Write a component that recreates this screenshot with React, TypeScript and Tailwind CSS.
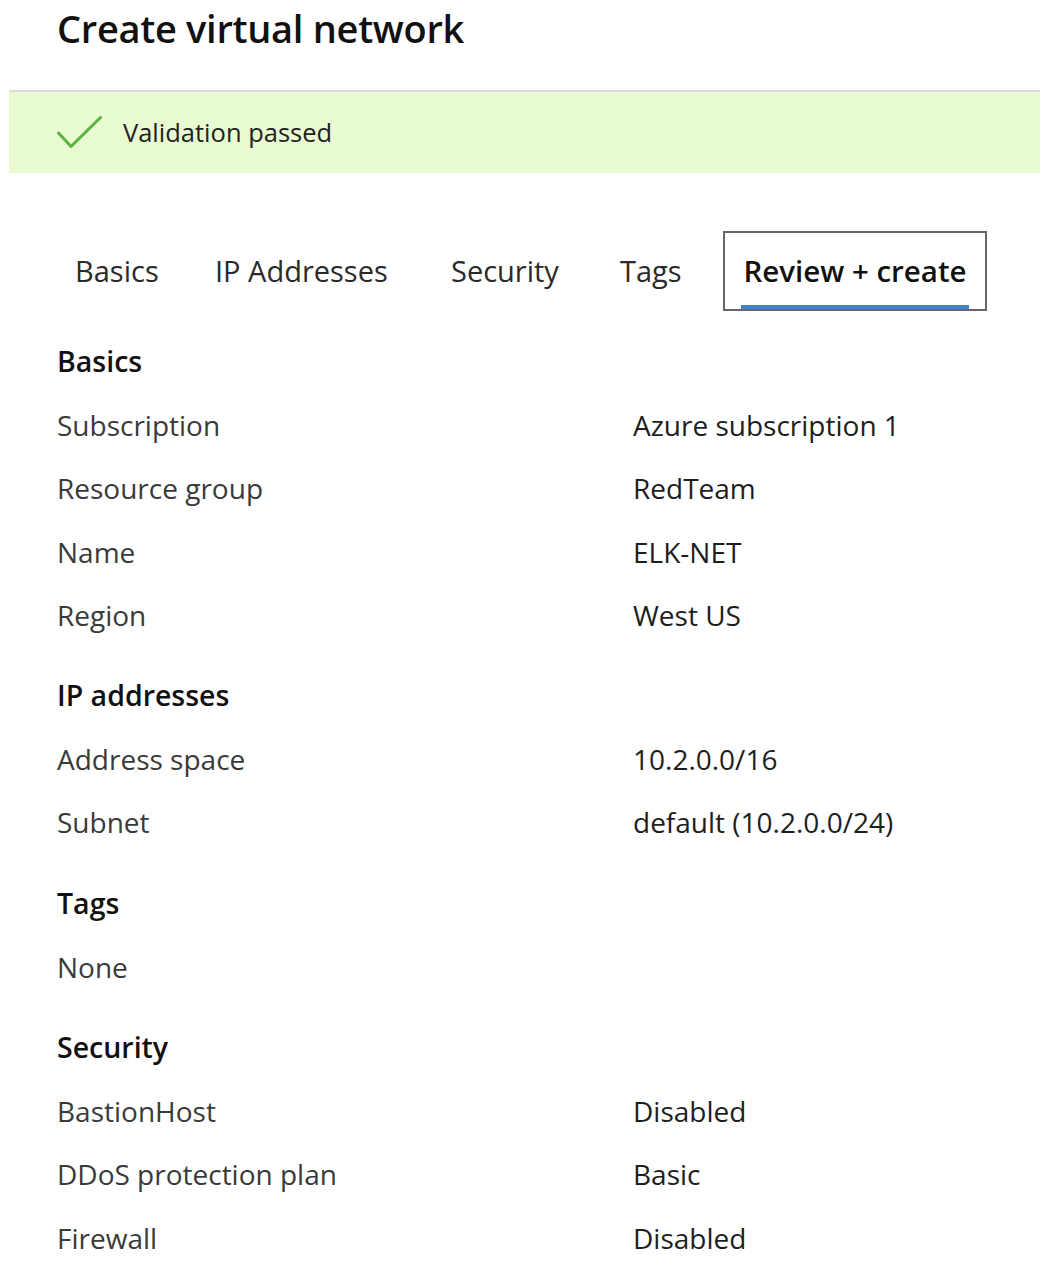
const sections = [
  {
    title: 'Basics',
    rows: [
      ['Subscription', 'Azure subscription 1'],
      ['Resource group', 'RedTeam'],
      ['Name', 'ELK-NET'],
      ['Region', 'West US'],
    ],
  },
  {
    title: 'IP addresses',
    rows: [
      ['Address space', '10.2.0.0/16'],
      ['Subnet', 'default (10.2.0.0/24)'],
    ],
  },
  { title: 'Tags', rows: [['None', '']] },
  {
    title: 'Security',
    rows: [
      ['BastionHost', 'Disabled'],
      ['DDoS protection plan', 'Basic'],
      ['Firewall', 'Disabled'],
    ],
  },
];

const tabs = [
  { label: 'Basics', w: 'w-[140px]' },
  { label: 'IP Addresses', w: 'w-[236px]' },
  { label: 'Security', w: 'w-[169px]' },
  { label: 'Tags', w: 'w-[103px]' },
];

export default function App() {
  return (
    <div className="w-[1048px] h-[1272px] bg-white overflow-hidden font-['Open_Sans',sans-serif] text-[#222]">
      <h1 className="pl-[57px] pt-0 h-[90px] text-[38px] font-semibold text-[#111] tracking-[-0.3px]">
        Create virtual network
      </h1>

      <div className="ml-[9px] w-[1031px] h-[83px] border-t-2 border-[#dcdcdc] bg-[#e9fbd0] flex items-center pl-[48px]">
        <svg width="45" height="33" viewBox="0 0 45 33">
          <polyline points="1.5,17 14,30.5 43.5,1.5" fill="none" stroke="#5cb440" strokeWidth="3" strokeLinecap="round" strokeLinejoin="round" />
        </svg>
        <span className="ml-[21px] text-[25.5px] text-[#222]">Validation passed</span>
      </div>

      <div className="flex items-center h-[80px] mt-[58px] pl-[75px] text-[29px] text-[#2a2a2a]">
        {tabs.map((t) => (
          <span key={t.label} className={t.w}>{t.label}</span>
        ))}
        <div className="relative w-[264px] h-[80px] border-2 border-[#666] flex items-center justify-center font-semibold text-[#111] text-[29.5px]">
          Review + create
          <div className="absolute left-[16px] right-[16px] bottom-0 h-[4px] bg-[#3f7fd9]" />
        </div>
      </div>

      <div className="pl-[57px] pt-[31px]">
        {sections.map((s) => (
          <div key={s.title} className="mb-[17px]">
            <div className="h-[64px] text-[28.5px] font-semibold text-[#111] leading-[38px]">{s.title}</div>
            {s.rows.map(([k, v]) => (
              <div key={k} className="flex h-[63.3px] text-[28px] leading-[38px]">
                <span className="w-[576px] text-[#3a3a3a]">{k}</span>
                <span className="text-[#1e1e1e]">{v}</span>
              </div>
            ))}
          </div>
        ))}
      </div>
    </div>
  );
}
